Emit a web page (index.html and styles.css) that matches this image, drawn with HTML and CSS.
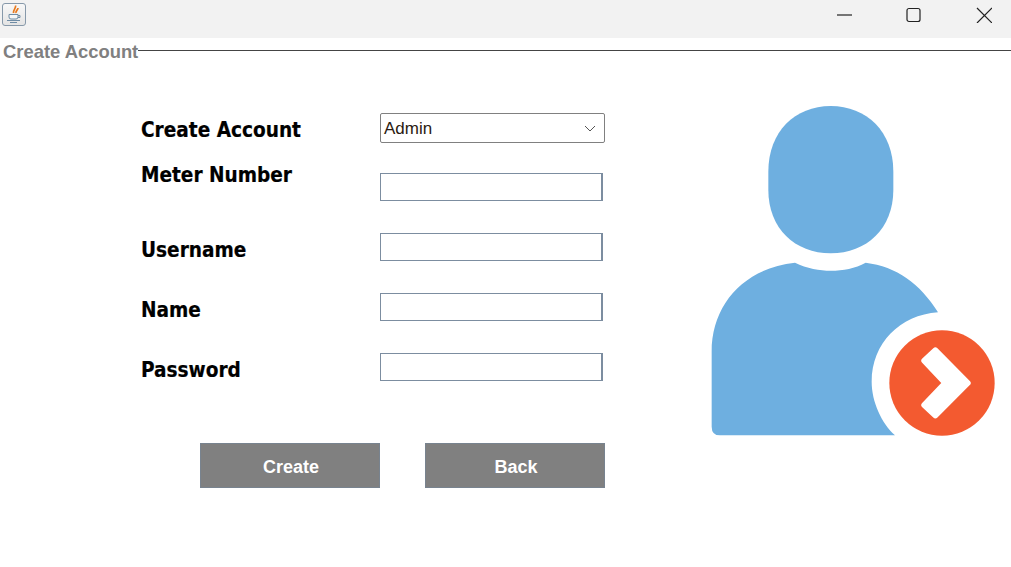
FILE: index.html
```html
<!DOCTYPE html>
<html lang="en">
<head>
<meta charset="utf-8">
<title>Create Account</title>
<link rel="stylesheet" href="styles.css">
</head>
<body>
<div class="window">
  <header class="titlebar">
    <div class="app-icon">
      <svg width="18" height="19" viewBox="0 0 18 19" fill="none">
        <path d="M10.500 0.500C11.500 3 8 4.500 8.500 8M13 3C13 5 10.500 5.500 11 8" stroke="#e8791e" stroke-width="1.700"/>
        <path d="M4 9.500H13V12Q13 14 11 14H6Q4 14 4 12Z" fill="#f4f6f8" stroke="#6f8ca5"/>
        <path d="M13 10.500H15V12.500H13M2 15.500H15M5 17.500H12" stroke="#6f8ca5"/>
      </svg>
    </div>
    <div class="controls">
      <svg width="16" height="16" viewBox="0 0 16 16"><path d="M1 8H16" class="glyph"/></svg>
      <svg width="16" height="16" viewBox="0 0 16 16"><rect x="1" y="1.500" width="13" height="13" rx="2" class="glyph"/></svg>
      <svg width="16" height="16" viewBox="0 0 16 16"><path d="M1 1L16 16M16 1L1 16" class="glyph"/></svg>
    </div>
  </header>

  <div class="legend">
    <span class="legend-text">Create Account</span>
    <span class="legend-line"></span>
  </div>

  <main class="content">
    <form class="form">
      <div class="row">
        <label class="label">Create Account</label>
        <div class="combo"><span class="combo-value">Admin</span>
          <svg width="12" height="7" viewBox="0 0 12 7" fill="none"><path d="M1 1L6 6L11 1" stroke="#555"/></svg>
        </div>
      </div>
      <div class="row">
        <label class="label label-top">Meter Number</label>
        <div class="field"></div>
      </div>
      <div class="row">
        <label class="label">Username</label>
        <div class="field"></div>
      </div>
      <div class="row">
        <label class="label">Name</label>
        <div class="field"></div>
      </div>
      <div class="row">
        <label class="label">Password</label>
        <div class="field"></div>
      </div>
      <div class="actions">
        <button type="button" class="btn">Create</button>
        <button type="button" class="btn">Back</button>
      </div>
    </form>
    <svg class="avatar" width="311" height="350" viewBox="0 0 933 1050">
      <path fill="#6eafe0" d="M205 230C205 110 285 33 392 33C500 33 580 110 580 230V285C580 400 500 475 392 475C285 475 205 400 205 285Z"/>
      <path fill="#6eafe0" d="M285 503C320 520 360 527 392 527C430 527 465 520 497 503C590 515 660 565 714 652C600 660 515 745 515 860C515 920 545 985 585 1021H60Q35 1021 35 995V770C35 630 130 520 285 503Z"/>
      <circle cx="726" cy="864" r="158" fill="#f35a30"/>
      <path fill="#fff" stroke="#fff" stroke-width="18" stroke-linejoin="round" d="M706 766L803 864L706 961L673 930L736 864L673 797Z"/>
    </svg>
  </main>
</div>
</body>
</html>
```
FILE: styles.css
```css
* { box-sizing: border-box; }
html, body { margin: 0; height: 100%; background: #fff; overflow: hidden; }
.window { width: 1011px; height: 567px; display: flex; flex-direction: column; }

.titlebar { height: 38px; flex: none; background: #f2f2f2; display: flex; justify-content: space-between; align-items: flex-start; padding: 3px 19px 0 2px; }
.app-icon { width: 24px; height: 23px; border: 1px solid #8799aa; border-radius: 3px; background: linear-gradient(#f8f8f8, #e4e4e4); display: flex; align-items: center; justify-content: center; }
.controls { display: flex; gap: 54px; padding-top: 4px; }
.glyph { fill: none; stroke: #222; stroke-width: 1.200; }

.legend { display: flex; align-items: flex-start; height: 24px; flex: none; padding-left: 3px; }
.legend-text { font: bold 18.400px/28px "Liberation Sans", Arial, sans-serif; color: #808080; white-space: nowrap; }
.legend-line { flex: 1; height: 1px; background: #444; margin-top: 12px; }

.content { display: flex; align-items: flex-start; padding: 51px 0 0 141px; }
.form { width: 464px; flex: none; }
.row { display: flex; height: 60px; align-items: flex-start; }
.label { width: 239px; flex: none; font: bold 20.600px/28px "DejaVu Sans", Verdana, sans-serif; font-stretch: condensed; -webkit-text-stroke: 0.2px #000; color: #000; padding-top: 3px; }
.label-top { margin-top: -15px; }
.combo { width: 225px; height: 30px; border: 1px solid #808080; border-radius: 2px; display: flex; align-items: center; justify-content: space-between; padding: 0 8px 0 3px; font: 17px "Liberation Sans", Arial, sans-serif; color: #2b1a10; }
.combo-value { padding-top: 1px; }
.field { width: 223px; height: 28px; border: 1px solid #7c8da0; border-right-width: 2px; background: #fff; }
.actions { display: flex; gap: 45px; padding: 30px 0 0 59px; }
.btn { width: 180px; height: 45px; border: 1px solid #78838f; background: #808080; color: #fff; font: bold 18px "Liberation Sans", Arial, sans-serif; padding: 3px 0 0 2px; }
.avatar { margin: -18px 0 0 95px; flex: none; }
```
